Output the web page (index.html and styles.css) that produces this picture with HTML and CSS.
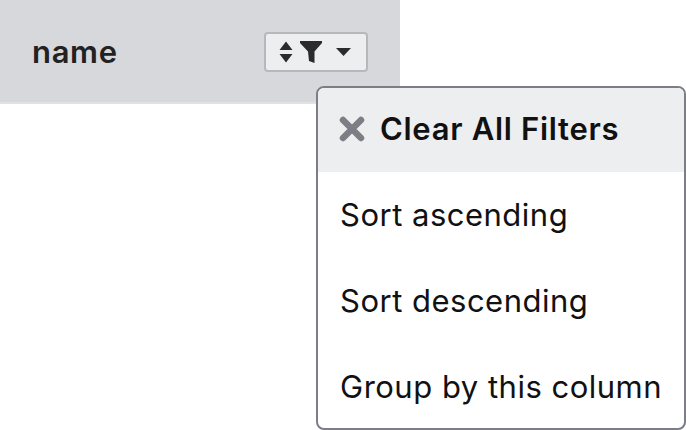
FILE: index.html
```html
<!DOCTYPE html>
<html lang="en">
<head>
  <meta charset="UTF-8">
  <meta name="viewport" content="width=device-width, initial-scale=1.0">
  <title>Column menu</title>
  <link rel="stylesheet" href="styles.css">
</head>
<body>
  <div class="header-cell">
    <span class="header-name">name</span>
    <button class="menu-toggle">
      <svg class="icon-sort" width="14" height="22" viewBox="0 0 14 22">
        <path d="M7 0.5 L13.5 9 H0.5 Z M7 21.5 L13.5 13 H0.5 Z" fill="#2b2b2d"/>
      </svg>
      <svg class="icon-filter" width="24" height="24" viewBox="0 0 24 24">
        <path d="M1 1 H23 V3 L15.5 11.5 V23 L10 21 L9 11.5 L1 3 Z" fill="#2b2b2d"/>
      </svg>
      <svg class="icon-caret" width="15" height="8" viewBox="0 0 15 8">
        <path d="M0 0 H15 L7.5 8 Z" fill="#2b2b2d"/>
      </svg>
    </button>
  </div>

  <div class="column-menu">
    <div class="menu-item menu-item-clear">
      <svg class="icon-clear" width="26" height="26" viewBox="0 0 26 26">
        <path d="M4 4 L22 22 M22 4 L4 22" stroke="#7d7d85" stroke-width="6.5" stroke-linecap="round"/>
      </svg>
      <span>Clear All Filters</span>
    </div>
    <div class="menu-item">Sort ascending</div>
    <div class="menu-item">Sort descending</div>
    <div class="menu-item">Group by this column</div>
  </div>
</body>
</html>
```

FILE: styles.css
```css
body {
  margin: 0;
  background: white;
  font-family: Inter, "Liberation Sans", sans-serif;
  color: #111;
  height: 430px;
  overflow: hidden;
}

.header-cell {
  box-sizing: border-box;
  width: 400px;
  height: 104px;
  background: #d7d8dc;
  border-bottom: 2px solid #e1e2e5;
  padding: 32px 32px 0;
  display: flex;
  justify-content: space-between;
  align-items: flex-start;
}

.header-name {
  font-size: 31px;
  font-weight: 600;
  letter-spacing: 0.67px;
  line-height: 40px;
  color: #222;
}

.menu-toggle {
  box-sizing: border-box;
  width: 104px;
  height: 40px;
  background: #edeef0;
  border: 2px solid #b7b8bd;
  border-radius: 4px;
  padding: 0 0 0 13px;
  display: flex;
  align-items: center;
}

.icon-filter {
  margin-left: 6px;
}

.icon-caret {
  margin-left: 13px;
}

.column-menu {
  position: absolute;
  left: 316px;
  top: 86px;
  box-sizing: border-box;
  width: 370px;
  height: 344px;
  background: white;
  border: 2px solid #7d7e85;
  border-radius: 8px;
  overflow: hidden;
}

.menu-item {
  height: 86px;
  padding-bottom: 2px;
  box-sizing: border-box;
  display: flex;
  align-items: center;
  gap: 15px;
  padding-left: 22px;
  font-size: 31px;
  letter-spacing: 0.5px;
}

.menu-item-clear {
  height: 84px;
  padding-left: 21px;
  padding-bottom: 0;
  background: #edeef0;
  font-weight: 600;
  letter-spacing: 0.7px;
}

.menu-item-clear span {
  margin-bottom: 4px;
}

.icon-clear {
  margin-bottom: 2px;
}
```
